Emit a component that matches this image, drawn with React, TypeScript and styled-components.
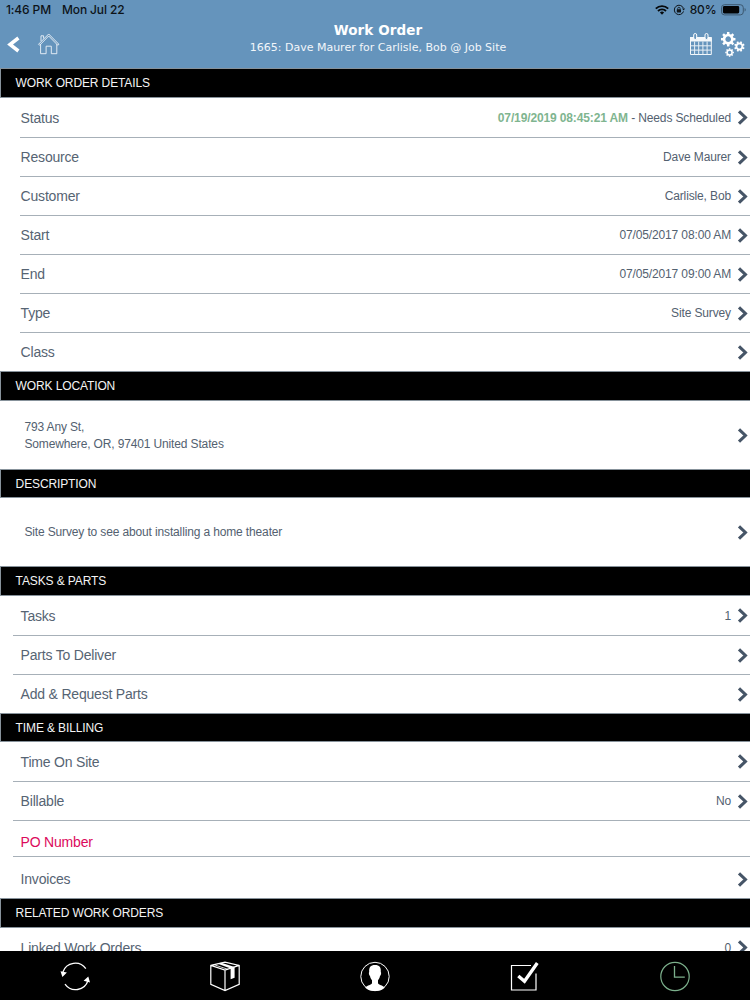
import React from "react";
import styled, { createGlobalStyle } from "styled-components";

const GlobalStyle = createGlobalStyle`
  * { box-sizing: border-box; }
  body { margin: 0; background: #fff; font-family: "Liberation Sans", Arial, sans-serif; }
`;

const Screen = styled.div`
  width: 750px;
  height: 1000px;
  display: flex;
  flex-direction: column;
  overflow: hidden;
`;

const Header = styled.header`
  flex: none;
  height: 68px;
  background: #6594bc;
`;

const StatusBar = styled.div`
  height: 20px;
  padding: 0 4px 0 6px;
  display: flex;
  align-items: center;
  justify-content: space-between;
  font: 500 12px/20px Inter, sans-serif;
  letter-spacing: -0.13px;
  color: #0d1318;
`;

const StatusGroup = styled.div<{ $gap: number }>`
  display: flex;
  align-items: center;
  gap: ${(p) => p.$gap}px;
`;

const NavBar = styled.div`
  height: 48px;
  display: grid;
  grid-template-columns: 90px 1fr 84px;
`;

const NavActions = styled.div<{ $end?: boolean }>`
  display: flex;
  justify-content: ${(p) => (p.$end ? "flex-end" : "flex-start")};
  svg { display: block; flex: none; }
`;

const Titles = styled.div`
  text-align: center;
  color: #fff;
  font-family: "DejaVu Sans", Verdana, sans-serif;
  padding-top: 2px;
`;

const Title = styled.h1`
  margin: 0;
  font-size: 13.5px;
  line-height: 16px;
  letter-spacing: 0.1px;
`;

const Subtitle = styled.div`
  font-size: 11px;
  line-height: 20px;
  color: #f2f6fa;
`;

const Content = styled.main`
  flex: 1;
  min-height: 0;
  overflow: hidden;
`;

const SectionHeading = styled.h2<{ $height?: number }>`
  margin: 0;
  height: ${(p) => p.$height ?? 30}px;
  padding-left: 14.6px;
  background: #000;
  border: 1px solid #87929b;
  border-right: 0;
  color: #f4f4f4;
  font-size: 12px;
  font-weight: 400;
  letter-spacing: -0.12px;
  line-height: 28px;
`;

const Row = styled.div<{ $height?: number; $inset?: number; $last?: boolean; $shift?: number }>`
  height: ${(p) => p.$height ?? 39}px;
  margin-left: ${(p) => p.$inset ?? 13}px;
  padding: ${(p) => p.$shift ?? 0}px 2px 0 ${(p) => 20.6 - (p.$inset ?? 13)}px;
  border-bottom: ${(p) => (p.$last ? "0" : "1px solid #a7b0b8")};
  display: flex;
  align-items: center;
`;

const Label = styled.span<{ $alert?: boolean }>`
  flex: 1;
  font-size: 14px;
  line-height: 18px;
  letter-spacing: -0.2px;
  color: ${(p) => (p.$alert ? "#dc0a5c" : "#566473")};
`;

const Value = styled.span`
  margin-right: 6px;
  font-size: 12px;
  line-height: 16px;
  letter-spacing: -0.13px;
  color: #536170;
`;

const Stamp = styled.b`
  color: #7fb590;
`;

const Block = styled.div<{ $height: number }>`
  height: ${(p) => p.$height}px;
  padding: 0 2px 0 24.4px;
  display: flex;
  align-items: center;
`;

const BlockText = styled.div`
  flex: 1;
  padding-top: 2px;
  font-size: 12px;
  line-height: 17.5px;
  letter-spacing: -0.14px;
  color: #536170;
`;

const TabBar = styled.nav`
  flex: none;
  height: 49px;
  background: #000;
  display: grid;
  grid-template-columns: repeat(5, 1fr);
  place-items: center;
  svg { display: block; }
`;

const Chevron = () => (
  <svg width="11" height="15" viewBox="0 0 11 15" fill="none">
    <path d="M2 1.4 8.4 7.5 2 13.6" stroke="#465567" strokeWidth="3.1" />
  </svg>
);

const WifiIcon = () => (
  <svg width="14" height="10" viewBox="0 0 14 10" fill="none" stroke="#05090c" strokeWidth="1.9">
    <path d="M.8 3.6a9 9 0 0 1 12.4 0M3 6a5.800 5.800 0 0 1 8 0" />
    <path d="M7 9.700 4.900 7.600a3 3 0 0 1 4.200 0z" fill="#05090c" stroke="none" />
  </svg>
);

const RotationLockIcon = () => (
  <svg width="12" height="12" viewBox="0 0 12 12" fill="none" stroke="#10161b">
    <path d="M10.4 4.2A4.7 4.7 0 1 0 10.5 7.4" strokeWidth="1" />
    <path d="M9 4.6h3L10.7 6.6z" fill="#10161b" stroke="none" />
    <path d="M4.7 5.6V4.5a1.2 1.2 0 0 1 2.4 0v1.1" strokeWidth=".8" />
    <rect x="3.8" y="5.3" width="4.2" height="3.1" rx=".4" fill="#10161b" stroke="none" />
  </svg>
);

const BatteryIcon = () => (
  <svg width="25" height="12" viewBox="0 0 25 12">
    <rect x=".5" y=".7" width="21.8" height="10.2" rx="3" fill="none" stroke="#3c5870" />
    <rect x="1.9" y="2.1" width="16.3" height="7.4" rx="1.4" fill="#030405" />
    <path d="M23.600 4.100c1.500.5 1.500 2.900 0 3.400z" fill="#3c5870" />
  </svg>
);

const NavLeftIcons = () => (
  <svg width="90" height="48" viewBox="0 0 90 48" fill="none" stroke="#fff">
    <path d="M18.4 18 10 24.5 18.4 31" strokeWidth="3.5" />
    <g stroke="#eef4f9" strokeWidth=".9">
      <path d="M38.600 24.200 48.700 14l10.100 10.200-1 1.100L48.700 16l-9.100 9.300z" />
      <path d="M40.600 24.200v9.500h5.500v-7.500h5.200v7.500h5.500v-9.500M41 21.200v-5.400h2.600v2.700" />
    </g>
  </svg>
);

const CalendarIcon = () => (
  <svg width="28" height="48" viewBox="0 0 28 48" fill="none">
    <path d="M4.500 18.200h20.800v16.300H4.500z" stroke="#f4f8fb" />
    <path d="M4 17h21.800v4.500H4z" fill="#f4f8fb" />
    <path d="M8.600 21.500v13M12.700 21.500v13M16.900 21.500v13M21.100 21.500v13M4.500 25.800h20.800M4.500 30.100h20.800" stroke="#e7eff6" />
    <rect x="7.700" y="13.500" width="3" height="6" rx="1.500" fill="#6594bc" stroke="#fff" />
    <rect x="19" y="13.500" width="3" height="6" rx="1.500" fill="#6594bc" stroke="#fff" />
  </svg>
);

type GearProps = { x: number; y: number; r: number; teeth: number; turn?: number };

const Gear = ({ x, y, r, teeth, turn = 0 }: GearProps) => (
  <g transform={`translate(${x} ${y}) rotate(${turn})`} stroke="#fff" fill="none">
    <circle r={r * 0.6} strokeWidth={r * 0.38} />
    {Array.from({ length: teeth }, (_, i) => (
      <path key={i} d={`M0 ${-r * 0.7}V${-r * 1.05}`} strokeWidth={r * 0.36} transform={`rotate(${(i * 360) / teeth})`} />
    ))}
  </g>
);

const GearsIcon = () => (
  <svg width="36" height="48" viewBox="0 0 36 48">
    <Gear x={14.2} y={19.2} r={6.9} teeth={8} />
    <Gear x={25.4} y={26.5} r={5} teeth={8} turn={22} />
    <Gear x={15.600} y={32.500} r={4.100} teeth={8} />
  </svg>
);

const SyncIcon = () => (
  <svg width="32" height="32" viewBox="0 0 32 32" fill="none" stroke="#fff" strokeWidth="1.3">
    <path d="M26.800 8.600A13 13 0 0 0 3.900 12M6 24.200A13 13 0 0 0 29 20.500" />
    <path d="m1.500 11.300 6.400 1.200-4.500 4.500zM31 22.400l-6.400-1.600 4.700-4.200z" fill="#fff" stroke="none" />
  </svg>
);

const BoxIcon = () => (
  <svg width="32" height="32" viewBox="0 0 32 32" fill="none" stroke="#fff" strokeWidth="1.2">
    <path d="M1.800 5.400 16 2.200l14.200 3.200v19L16 30.500 1.800 24.400zM1.800 5.400 16 10l14.200-4.600M16 10v20.500" />
    <path d="m8.200 3.600 13.400 4.900v10.700l4-1.400V7.100L12.300 2.800z" fill="#fff" stroke="none" />
    <path d="m5 4.700 13.800 4.600" strokeWidth=".8" />
  </svg>
);

const PersonIcon = () => (
  <svg width="32" height="32" viewBox="0 0 32 32">
    <circle cx="16" cy="16.500" r="14.200" fill="none" stroke="#fff" />
    <path d="M16 5c-4.500 0-6.200 2.500-5.800 7-.7.5-.2 3.600.8 4 .3 1.800.9 3 2 4.200v3c-.4 1.800-5 1.800-6.700 4.500A14 14 0 0 0 16 30.900a14 14 0 0 0 9.700-3.200c-1.700-2.700-6.300-2.700-6.700-4.500v-3c1.100-1.200 1.700-2.400 2-4.200 1-.4 1.500-3.500.8-4C22.200 7.500 20.500 5 16 5z" fill="#fff" />
  </svg>
);

const CheckboxIcon = () => (
  <svg width="32" height="32" viewBox="0 0 32 32" fill="none" stroke="#fff">
    <path d="M22 5.500H2.500v24.500h24.500V13.500" strokeWidth="1.200" />
    <path d="m9.300 16 6.200 5.300L28.300 3" strokeWidth="3.300" />
  </svg>
);

const ClockIcon = () => (
  <svg width="32" height="32" viewBox="0 0 32 32" fill="none" stroke="#7cb08c">
    <circle cx="16" cy="16.500" r="14.200" strokeWidth="1.200" />
    <path d="M15.500 6v11.200h10.300" strokeWidth="1.300" />
  </svg>
);

type ItemProps = {
  label: string;
  value?: React.ReactNode;
  height?: number;
  inset?: number;
  last?: boolean;
  alert?: boolean;
  shift?: number;
};

const Item = ({ label, value, height, inset, last, alert, shift }: ItemProps) => (
  <Row $height={height} $inset={inset} $last={last} $shift={shift}>
    <Label $alert={alert}>{label}</Label>
    {value !== undefined && <Value>{value}</Value>}
    {!alert && <Chevron />}
  </Row>
);

export default function App() {
  return (
    <Screen>
      <GlobalStyle />
      <Header>
        <StatusBar>
          <StatusGroup $gap={11}>
            <span>1:46 PM</span>
            <span>Mon Jul 22</span>
          </StatusGroup>
          <StatusGroup $gap={4.5}>
            <WifiIcon />
            <RotationLockIcon />
            <span>80%</span>
            <BatteryIcon />
          </StatusGroup>
        </StatusBar>
        <NavBar>
          <NavActions><NavLeftIcons /></NavActions>
          <Titles>
            <Title>Work Order</Title>
            <Subtitle>1665: Dave Maurer for Carlisle, Bob @ Job Site</Subtitle>
          </Titles>
          <NavActions $end>
            <CalendarIcon />
            <GearsIcon />
          </NavActions>
        </NavBar>
      </Header>
      <Content>
        <SectionHeading>WORK ORDER DETAILS</SectionHeading>
        <Item label="Status" height={40} inset={20} value={<><Stamp>07/19/2019 08:45:21 AM</Stamp> - Needs Scheduled</>} />
        <Item label="Resource" inset={20} value="Dave Maurer" />
        <Item label="Customer" inset={20} value="Carlisle, Bob" />
        <Item label="Start" inset={20} value="07/05/2017 08:00 AM" />
        <Item label="End" inset={20} value="07/05/2017 09:00 AM" />
        <Item label="Type" inset={20} value="Site Survey" />
        <Item label="Class" height={38} inset={20} last />
        <SectionHeading>WORK LOCATION</SectionHeading>
        <Block $height={68}>
          <BlockText>793 Any St,<br />Somewhere, OR, 97401 United States</BlockText>
          <Chevron />
        </Block>
        <SectionHeading $height={29}>DESCRIPTION</SectionHeading>
        <Block $height={68}>
          <BlockText>Site Survey to see about installing a home theater</BlockText>
          <Chevron />
        </Block>
        <SectionHeading>TASKS &amp; PARTS</SectionHeading>
        <Item label="Tasks" height={40} value="1" />
        <Item label="Parts To Deliver" />
        <Item label="Add & Request Parts" height={38} last />
        <SectionHeading $height={29}>TIME &amp; BILLING</SectionHeading>
        <Item label="Time On Site" height={40} />
        <Item label="Billable" value="No" />
        <Item label="PO Number" height={36} alert shift={6} />
        <Item label="Invoices" height={41} shift={3} last />
        <SectionHeading>RELATED WORK ORDERS</SectionHeading>
        <Item label="Linked Work Orders" height={40} value="0" />
      </Content>
      <TabBar>
        <SyncIcon />
        <BoxIcon />
        <PersonIcon />
        <CheckboxIcon />
        <ClockIcon />
      </TabBar>
    </Screen>
  );
}
